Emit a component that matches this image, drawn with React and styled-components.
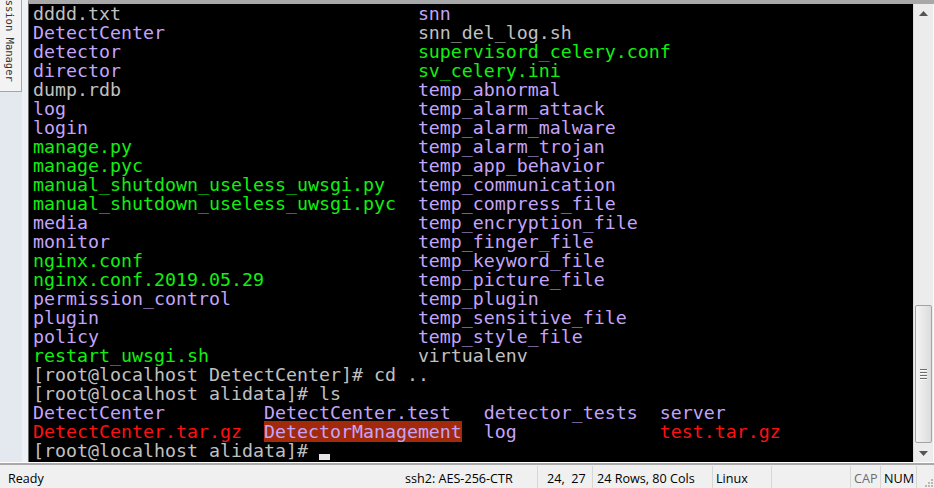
import styled, { createGlobalStyle } from "styled-components";

const GRAY = "#c0c0c0";
const DIR = "#c4a4fb";
const EXE = "#10f010";
const ARC = "#ff1010";

const listing = [
    [["dddd.txt", GRAY], ["snn", DIR]],
    [["DetectCenter", DIR], ["snn_del_log.sh", GRAY]],
    [["detector", DIR], ["supervisord_celery.conf", EXE]],
    [["director", DIR], ["sv_celery.ini", EXE]],
    [["dump.rdb", GRAY], ["temp_abnormal", DIR]],
    [["log", DIR], ["temp_alarm_attack", DIR]],
    [["login", DIR], ["temp_alarm_malware", DIR]],
    [["manage.py", EXE], ["temp_alarm_trojan", DIR]],
    [["manage.pyc", EXE], ["temp_app_behavior", DIR]],
    [["manual_shutdown_useless_uwsgi.py", EXE], ["temp_communication", DIR]],
    [["manual_shutdown_useless_uwsgi.pyc", EXE], ["temp_compress_file", DIR]],
    [["media", DIR], ["temp_encryption_file", DIR]],
    [["monitor", DIR], ["temp_finger_file", DIR]],
    [["nginx.conf", EXE], ["temp_keyword_file", DIR]],
    [["nginx.conf.2019.05.29", EXE], ["temp_picture_file", DIR]],
    [["permission_control", DIR], ["temp_plugin", DIR]],
    [["plugin", DIR], ["temp_sensitive_file", DIR]],
    [["policy", DIR], ["temp_style_file", DIR]],
    [["restart_uwsgi.sh", EXE], ["virtualenv", GRAY]],
];

const lsRows = [
    [["DetectCenter", DIR], ["DetectCenter.test", DIR], ["detector_tests", DIR], ["server", DIR]],
    [["DetectCenter.tar.gz", ARC], ["DetectorManagement", DIR, true], ["log", DIR], ["test.tar.gz", ARC]],
];

const GlobalStyle = createGlobalStyle`
    html, body {
        margin: 0;
        padding: 0;
        background: #f0f0f0;
        overflow: hidden;
    }
`;

export default function App() {
    return (
        <Window>
            <GlobalStyle />
            <Main>
                <Side>
                    <SessionTab>
                        <span>Session Manager</span>
                    </SessionTab>
                </Side>
                <TermFrame>
                    <Terminal>
                        {listing.map((row, i) => (
                            <Row key={i} cols="35ch 1fr">
                                {row.map(([name, color], j) => (
                                    <div key={j}><Txt color={color}>{name}</Txt></div>
                                ))}
                            </Row>
                        ))}
                        <Line>[root@localhost DetectCenter]# cd ..</Line>
                        <Line>[root@localhost alidata]# ls</Line>
                        {lsRows.map((row, i) => (
                            <Row key={i} cols="21ch 20ch 16ch 1fr">
                                {row.map(([name, color, hl], j) => (
                                    <div key={j}><Txt color={color} hl={hl}>{name}</Txt></div>
                                ))}
                            </Row>
                        ))}
                        <Line>[root@localhost alidata]# <Cursor /></Line>
                    </Terminal>
                    <Scrollbar>
                        <Arrow>
                            <svg width="9" height="5" viewBox="0 0 9 5"><path d="M4.5 0 L9 5 L0 5 Z" fill="#555" /></svg>
                        </Arrow>
                        <Track>
                            <Thumb>
                                <Grip>
                                    <i /><i /><i /><i />
                                </Grip>
                            </Thumb>
                        </Track>
                        <Arrow>
                            <svg width="9" height="5" viewBox="0 0 9 5"><path d="M0 0 L9 0 L4.5 5 Z" fill="#555" /></svg>
                        </Arrow>
                    </Scrollbar>
                </TermFrame>
            </Main>
            <StatusBar>
                <Pane grow pad="8px">Ready</Pane>
                <Pane w="137px" pad="4px" sep>ssh2: AES-256-CTR</Pane>
                <Pane w="55px" pad="9px" sep>{"24,  27"}</Pane>
                <Pane w="120px" pad="4px" sep>24 Rows, 80 Cols</Pane>
                <Pane w="59px" pad="3px" sep>Linux</Pane>
                <Pane w="79px" sep />
                <Pane w="30px" pad="3px" dim sep>CAP</Pane>
                <Pane w="36px" pad="3px" sep>NUM</Pane>
                <SizeGrip>
                    <svg width="12" height="12" viewBox="0 0 12 12">
                        {[[9, 3], [6, 6], [9, 6], [3, 9], [6, 9], [9, 9]].map(([x, y], k) => (
                            <rect key={k} x={x} y={y} width="2" height="2" fill="#b8b8b8" />
                        ))}
                    </svg>
                </SizeGrip>
            </StatusBar>
        </Window>
    );
}

const Window = styled.div`
    width: 934px;
    height: 488px;
    display: flex;
    flex-direction: column;
    background: #f0f0f0;
`;

const Main = styled.div`
    display: flex;
    height: 462px;
    border-bottom: 1px solid #ffffff;
    box-shadow: 0 2px 0 #a9a9a9;
`;

const Side = styled.div`
    width: 22px;
    background: #e4e8ef;
    border-right: 6px solid #eef1f6;
`;

const SessionTab = styled.div`
    height: 91px;
    background: #f3f3f3;
    border-right: 1px solid #a5a5a5;
    border-bottom: 1px solid #a5a5a5;
    overflow: hidden;

    span {
        display: block;
        margin-top: -13px;
        margin-left: 4px;
        writing-mode: vertical-rl;
        font-family: "DejaVu Sans Mono", monospace;
        font-size: 10.5px;
        color: #333333;
        white-space: nowrap;
    }
`;

const TermFrame = styled.div`
    flex: 1;
    display: flex;
    border-top: 4px solid #a8a8a8;
    border-left: 1px solid #6b6b6b;
`;

const Terminal = styled.div`
    width: 884px;
    box-sizing: border-box;
    padding-left: 4px;
    background: #000000;
    font-family: "DejaVu Sans Mono", monospace;
    font-size: 18.27px;
    line-height: 19px;
    color: ${GRAY};
    white-space: pre;
`;

const Row = styled.div`
    display: grid;
    grid-template-columns: ${props => props.cols};
    height: 19px;
`;

const Txt = styled.span`
    color: ${props => props.color};
    background: ${props => props.hl ? "#a3290b" : "transparent"};
`;

const Line = styled.div`
    height: 19px;
`;

const Cursor = styled.span`
    display: inline-block;
    width: 11px;
    height: 6px;
    background: #e6e6e6;
    vertical-align: -3px;
`;

const Scrollbar = styled.div`
    width: 19px;
    display: flex;
    flex-direction: column;
    background: #ececec;
    border-left: 1px solid #dcdcdc;
    border-right: 1px solid #fafafa;
`;

const Arrow = styled.div`
    height: 18px;
    display: flex;
    align-items: center;
    justify-content: center;
`;

const Track = styled.div`
    flex: 1;
    display: flex;
    flex-direction: column;
    justify-content: flex-end;
    padding: 0 1px 1px;
`;

const Thumb = styled.div`
    height: 138px;
    box-sizing: border-box;
    border: 1px solid #a3a3a3;
    border-radius: 2px;
    background: linear-gradient(to right, #f4f4f4, #dcdcdc);
    display: flex;
    align-items: center;
    justify-content: center;
`;

const Grip = styled.div`
    display: flex;
    flex-direction: column;
    gap: 1px;

    i {
        display: block;
        width: 7px;
        height: 1px;
        background: #6d6d6d;
        border-bottom: 1px solid #fafafa;
    }
`;

const StatusBar = styled.div`
    flex: 1;
    margin-top: 3px;
    display: flex;
    align-items: center;
    font-family: "Open Sans", "Liberation Sans", sans-serif;
    font-size: 12.6px;
    color: #000000;
    background: #f0f0f0;
`;

const Pane = styled.div`
    flex: ${props => props.grow ? 1 : "none"};
    width: ${props => props.w || "auto"};
    box-sizing: border-box;
    height: 100%;
    display: flex;
    align-items: center;
    padding-left: ${props => props.pad || "0"};
    padding-top: 2px;
    white-space: pre;
    overflow: hidden;
    color: ${props => props.dim ? "#6d6d6d" : "#000000"};
    border-right: ${props => props.sep ? "1px solid #d7d7d7" : "1px solid transparent"};
`;

const SizeGrip = styled.div`
    width: 17px;
    height: 100%;
    display: flex;
    align-items: flex-end;
    justify-content: flex-end;
    padding-bottom: 1px;
`;
